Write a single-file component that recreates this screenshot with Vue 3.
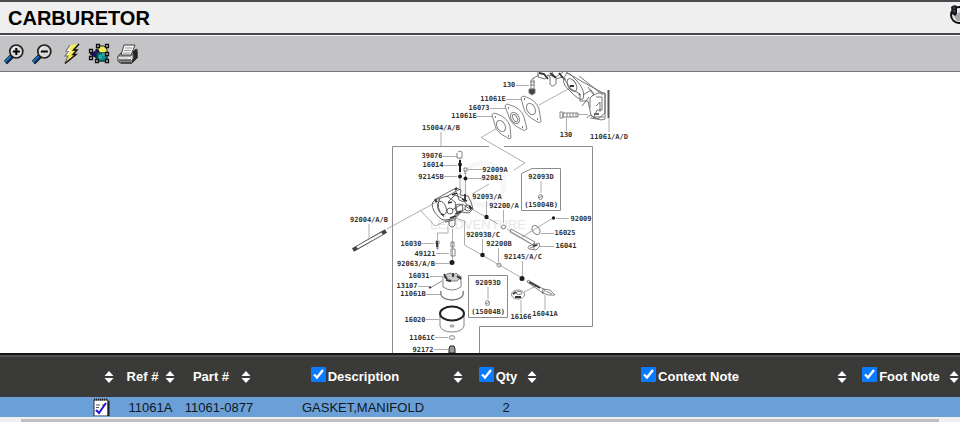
<script setup>
import { ref } from 'vue'

const columns = ref([
  { key: 'note', label: '', toggle: false },
  { key: 'ref', label: 'Ref #', toggle: false },
  { key: 'part', label: 'Part #', toggle: false },
  { key: 'description', label: 'Description', toggle: true, on: true },
  { key: 'qty', label: 'Qty', toggle: true, on: true },
  { key: 'context', label: 'Context Note', toggle: true, on: true },
  { key: 'foot', label: 'Foot Note', toggle: true, on: true }
])

const rows = [
  { ref: '11061A', part: '11061-0877', description: 'GASKET,MANIFOLD', qty: '2', context: '', foot: '' }
]

// Callouts of the exploded view: text, centre x, centre y
const callouts = [
  ['130', 509, 85], ['11061E', 493, 99], ['16073', 479, 108], ['11061E', 464, 116],
  ['130', 566, 135], ['11061/A/D', 609, 137], ['15004/A/B', 441, 128],
  ['39076', 432, 156], ['16014', 433, 165], ['92145B', 431, 177],
  ['92009A', 495, 170], ['92081', 492, 178], ['92093D', 541, 177], ['(15004B)', 541, 205],
  ['92093/A', 487, 197], ['92200/A', 504, 206], ['92009', 581, 219], ['16025', 565, 233],
  ['16041', 566, 246], ['92093B/C', 483, 235], ['92200B', 499, 244], ['92145/A/C', 523, 257],
  ['92004/A/B', 369, 220], ['16030', 411, 244], ['49121', 425, 254], ['92063/A/B', 416, 264],
  ['16031', 419, 276], ['13107', 407, 286], ['11061B', 413, 294], ['92093D', 488, 283],
  ['(15004B)', 488, 312], ['16166', 521, 317], ['16041A', 545, 314], ['16020', 415, 320],
  ['11061C', 422, 338], ['92172', 423, 350]
]
</script>

<template>
  <main class="page">
    <header class="title-bar">
      <h1>CARBURETOR</h1>
      <button class="tool" aria-label="History">
        <svg viewBox="0 0 22 22">
          <circle cx="11" cy="11" r="8" fill="#e4e4e4" stroke="#111" stroke-width="2" />
          <path d="M6 12l6-4 5 2v6l-8 1z" fill="#aaa" />
          <path d="M3 3q3-3 6-1v8l-2 2-3-2z" fill="#17191f" />
          <path d="M5 4h2M5 7h2" stroke="#65738a" />
        </svg>
      </button>
    </header>

    <nav class="toolbar">
      <button class="tool" aria-label="Zoom in">
        <svg viewBox="0 0 22 22">
          <path d="M1.5 19.5L8 13" stroke="#111" stroke-width="4.6" />
          <path d="M1 19L7 13" stroke="#1677c8" stroke-width="2" />
          <path d="M2 20.5L8 14.5" stroke="#102d75" stroke-width="1.5" />
          <circle cx="12.3" cy="8.5" r="6.5" fill="#dadada" stroke="#222" stroke-width="1.7" />
          <path d="M8 8a4.6 4.6 0 0 1 3-4" fill="none" stroke="#fff" />
          <path d="M8.8 8.5h7M12.3 5v7" stroke="#050505" stroke-width="2" />
        </svg>
      </button>
      <button class="tool" aria-label="Zoom out">
        <svg viewBox="0 0 22 22">
          <path d="M1.5 19.5L8 13" stroke="#111" stroke-width="4.6" />
          <path d="M1 19L7 13" stroke="#1677c8" stroke-width="2" />
          <path d="M2 20.5L8 14.5" stroke="#102d75" stroke-width="1.5" />
          <circle cx="12.3" cy="8.5" r="6.5" fill="#dadada" stroke="#222" stroke-width="1.7" />
          <path d="M8 8a4.6 4.6 0 0 1 3-4" fill="none" stroke="#fff" />
          <path d="M8.8 8.5h7" stroke="#050505" stroke-width="2" />
        </svg>
      </button>
      <button class="tool" aria-label="Hotspots">
        <svg viewBox="0 0 22 22">
          <path d="M10 2L19 1l-5.500 6H17L13 11.500h3L5 20l3-7H5l4-5H6z" fill="#f4ec50" />
          <path d="M10 2L6 8h3l-4 5h3l-3 7" fill="none" stroke="#777" stroke-width="1.200" />
          <path d="M19 1l-5.500 6H17l-4 4.500h3L5 20.500" fill="none" stroke="#111" stroke-width="1.500" />
          <path d="M11 3L7.500 7.500h3L7 12" fill="none" stroke="#fff" />
        </svg>
      </button>
      <button class="tool" aria-label="Select parts">
        <svg viewBox="0 0 22 22">
          <path d="M10 3h6l3 3v6h-9z" fill="#f1ed57" stroke="#222" />
          <path d="M2 11l6-3v-2l3 2v9l-4-3z" fill="#12127a" stroke="#111" />
          <path d="M9 10h10v8H9z" fill="#078d8b" stroke="#143b45" stroke-width="1.500" />
          <path d="M11 12h3v-2h3v3h-3v3h-3z" fill="#2fa597" />
          <g fill="#ccc" stroke="#111" stroke-width="1.300">
            <path d="M8.500 1.500h3v3h-3zM17.500 1.500h3v3h-3zM1.500 6.500h3v3h-3zM1.500 13.500h3v3h-3zM7.500 16.500h3v3h-3zM17.500 9.500h3v3h-3zM17.500 16.500h3v3h-3z" />
          </g>
        </svg>
      </button>
      <button class="tool" aria-label="Print">
        <svg viewBox="0 0 22 22">
          <path d="M2 13l4-4h11l4-3v9l-5 5H4l-2-2z" fill="#aaa" stroke="#333" />
          <path d="M17 8l3-2 1.500 3v6L16 20z" fill="#242424" />
          <path d="M8 2h11l-4 10H5z" fill="#f5f5f5" stroke="#444" />
          <path d="M9 5h7M8 7.500h7M7 10h7" stroke="#999" />
          <path d="M2 13h13l2-2v5l-2 2H2z" fill="#ddd" stroke="#666" />
          <path d="M3 17h12M5 20h11" stroke="#222" />
          <path d="M12 15h2" stroke="#fff" />
        </svg>
      </button>
    </nav>

    <section class="diagram">
      <svg class="exploded" viewBox="330 72 300 281" role="img" aria-label="Carburetor exploded view">
        <g class="watermark">
          <circle cx="483" cy="184" r="21" fill="none" stroke="#f7f7f7" stroke-width="5" />
          <text x="478" y="229" text-anchor="middle">LEADVENTURE</text>
        </g>

        <!-- assembly frame and inset boxes -->
        <g class="frame">
          <path d="M392.500 353V146.500H489M504 146.500H592.500V326.500H479.500V353" />
          <path d="M521.500 210.500V173.500L532 168.500H560.500V210.500ZM468.500 275.500H507.500V317.500H468.500Z" />
        </g>

        <!-- leaders -->
        <g class="leader">
          <path d="M441 132V146M443 156.500H457M444 165.500H457M444 176.500H457M468 169.500H482M468 178.500H482" />
          <path d="M516 85.500H529M506 99.500H522M490 108.500H507M476 116.500H493M566.500 118V131M609 118V132M578 114.500H588" />
          <path d="M541 181V193M486.500 201V215M503.500 210V223M556 218.500H569M541 233.500H554M540 246.500H554" />
          <path d="M482.500 239V253M498.500 248V262M522.500 261V276M488 287V299M521 300V313M545 295V310" />
          <path d="M369 224V238M422 243.500H434M436 253.500H449M435 263.500H449M430 276.500H442M418 286.500H430M426 294.500H441M426 319.500H439M435 337.500H448M434 349.500H448" />
          <path d="M539 105L570 88M499 127L481 137.500L525 163L514 170M387 229L440 200M421 211L435 226L452 218" />
          <path d="M472 209L498 224M507 229L530 243M455 218L464.500 221V245L482 255L522 278M522 237L553 218M524 292L536 286" />
          <path d="M460 158V190M465.500 173V202M472 194L489 184M448 227V233H437.500V240M452.500 229V260" />
        </g>

        <!-- intake manifold -->
        <g class="part manifold">
          <path d="M538 72v5l7 2 3-4 2 2v7q2 4 6 0v-5l7-2 8 12 9 5v7h8l3 14q8 7 14 4V94l-24-13-15-9" />
          <path d="M532 79l7-4M548 75l8 2 7-5M567 73q-8 9 2 17 10 11 14 9 3-8-6-18-6-7-10-8ZM583 95l8-5 3 4-4 4M590 98v10M582 106l7-9M592 96l6-3h7v20l-7 6-8-1M596 97h6v13h-5l-3 7h10" />
          <ellipse cx="572" cy="85" rx="4" ry="7" transform="rotate(-30 572 85)" />
          <path d="M579 76l24 19M593 94l-5-7M596 106l4-4v10M552 72l2 4M587 118q3-5 7 0" />
          <path d="M564 78l1 2M579 94l1 1M594 114h5" stroke-width="2" />
        </g>
        <path class="solid" d="M539 73l5 1 4 5M550 73l6 5M559 73l4 5M570 86h4" />
        <path class="plate" d="M608.500 90V118" />

        <!-- bolts near the manifold -->
        <g class="part">
          <path d="M531 80h3v9h-3zM530 82h5M530 85h5M563 113h15v4h-15zM560 112h3v6h-3zM567 113v4M570 113v4M573 113v4M576 113v4" />
          <path class="filled" d="M529 89h6v4l-3 2-3-2z" />
        </g>

        <!-- gaskets and spacer -->
        <g class="part gasket">
          <path d="M521 98q1-3 5-1 10 3 13 12l2 12q-1 3-5 0-10-5-12-12Z" />
          <ellipse cx="531" cy="109" rx="4" ry="6" transform="rotate(-28 531 109)" />
          <path d="M505 106q1-3 5-1 11 3 14 12l3 12q-2 3-6 0-10-5-12-12Z" />
          <ellipse cx="515" cy="118" rx="4" ry="6" transform="rotate(-28 515 118)" />
          <ellipse cx="515" cy="118" rx="2" ry="4" transform="rotate(-28 515 118)" />
          <path d="M492 115q1-3 5-1 10 3 13 12l1 12q-2 2-5-1-10-5-11-12Z" />
          <ellipse cx="501" cy="126" rx="4" ry="6" transform="rotate(-28 501 126)" />
          <path d="M524 99h1M537 119h1M508 108h1M522 127h1M495 117h1M508 136h1" stroke-width="2" />
        </g>

        <!-- carburetor body -->
        <g class="part body">
          <path d="M435 200q-5 3-1 11 5 8 10 9l9-1 4-8-2-9-8-6ZM434 200l22-12 5 2-1 5 8 1 3 6 2 7-4 4-8-1-7 8-9 2" />
          <path d="M440 198q-5 10 4 19M446 197l14-8M448 202l7-7 7 3 5 7M452 210l10-6 8 5M455 217l10-8M457 193l2 7 5 2" />
          <ellipse cx="442" cy="208" rx="4" ry="7" transform="rotate(-20 442 208)" />
          <circle cx="459" cy="208" r="4" /><circle cx="450" cy="211" r="3" /><circle cx="468" cy="208" r="3" />
          <path d="M449 219v6q3 4 6 0v-7" />
        </g>
        <path class="solid" d="M435 200l2 2M452 195l5-2M462 199l5 2M448 203l4-1M456 214l5-3M469 206l3 3M441 214l3 1M455 190l2-2M465 194v7M450 218l6-2" />

        <!-- small parts above and right of the body -->
        <g class="part">
          <path d="M458 152l2-1 2 1v6h-5v-5M464 168h3v3h-3zM465 171v3" />
          <circle cx="503.500" cy="227" r="2" /><circle cx="499" cy="265" r="2" />
          <ellipse cx="540.500" cy="197" rx="2" ry="2.500" /><path d="M539 198l3-2" />
          <ellipse cx="487.500" cy="303" rx="2" ry="2.500" /><path d="M486 304l3-2" />
          <ellipse cx="536" cy="230" rx="3.500" ry="5" transform="rotate(-35 536 230)" />
          <path d="M511 229l24 13-2 3-23-13ZM529 246l10-3 1 3-4 4-7-1q-2-2 0-3ZM528 280l17 10-2 3-16-11ZM543 289l7 1 5 5-6 0-7-2Z" />
          <path d="M530 248l8-3M534 243v6M546 291l6 3" />
          <ellipse cx="518" cy="294.500" rx="6.500" ry="4.500" /><ellipse cx="519" cy="293" rx="3" ry="1.500" />
        </g>
        <path class="solid" d="M513 294l3-2M515 297h6M529 282l11 6M533 246l4-1" />
        <g class="dots">
          <circle cx="460" cy="164.500" r="2" /><circle cx="460" cy="176.500" r="2" />
          <circle cx="465.500" cy="178.500" r="2" /><circle cx="486.500" cy="217" r="2.200" />
          <circle cx="482.500" cy="255" r="2.300" /><circle cx="522" cy="278.500" r="2.500" />
          <circle cx="452" cy="262.500" r="2.500" /><circle cx="553.500" cy="218" r="1.700" />
          <path d="M459 160h2v12h-2z" />
        </g>

        <!-- throttle shaft -->
        <path d="M353 250L386 231" stroke="#444" stroke-width="4" />
        <path d="M357 247.500L382 233.500" stroke="#fff" stroke-width="2.500" />

        <!-- float, bowl and drain parts -->
        <g class="part">
          <path d="M436 241h3v3h-3zM437 244h1v5h-1zM451 242h3v5h-3zM451 249h4v7h-4z" />
          <path d="M443 276v11q9 6 18 0v-11M430 288l12-7" />
          <path d="M441 291q-2 8 11 9 13-1 11-9" stroke-width="1.300" />
          <path d="M440 315v11q2 6 12 6t12-6v-11" />
          <ellipse cx="452" cy="326" rx="2" ry="1" />
          <ellipse cx="452" cy="337.500" rx="2.700" ry="1.800" />
          <path d="M444 277q2-4 7-4l2 3 3-3 5 4-4 4-9 0Z" fill="#ccc" />
        </g>
        <path class="solid" d="M444 274l3 5M446 280l5 1M453 273v4M457 276l4 3M429 288l2-1M437 241v6" />
        <ellipse class="seal" cx="452" cy="313.500" rx="12" ry="7" />
        <path d="M450 346h4l1 3v4h-6v-4z" fill="#999" stroke="#222" />

        <g class="callouts">
          <text v-for="([label, x, y], i) in callouts" :key="i" :x="x" :y="y + 2" text-anchor="middle">{{ label }}</text>
        </g>
      </svg>
    </section>

    <section class="parts">
      <table>
        <colgroup>
          <col v-for="c in columns" :key="c.key" :class="'col-' + c.key" />
        </colgroup>
        <thead>
          <tr>
            <th v-for="c in columns" :key="c.key">
              <div class="head">
                <label v-if="c.toggle" class="caption">
                  <input v-model="c.on" type="checkbox" />{{ c.label }}
                </label>
                <span v-else class="caption">{{ c.label }}</span>
                <button class="sort" :aria-label="'Sort ' + c.label">
                  <svg viewBox="0 0 10 12"><path d="M5 0l4.500 5H.5zM5 12L.5 7h9z" fill="#fff" /></svg>
                </button>
              </div>
            </th>
          </tr>
        </thead>
        <tbody>
          <tr v-for="r in rows" :key="r.part">
            <td class="note">
              <button class="pad" aria-label="Part notes">
                <svg viewBox="0 0 18 18">
                  <path d="M2 2h14v16H2z" fill="#fff" stroke="#333" />
                  <path d="M16.500 3v15" stroke="#222" stroke-width="2" />
                  <path d="M2 1.500h14" stroke="#222" stroke-width="2" stroke-dasharray="1 1" />
                  <path d="M4 7h4M4 9.500h3M10 7h3" stroke="#555" />
                  <path d="M4 12l3 3 7-10" fill="none" stroke="#2314d2" stroke-width="2" />
                </svg>
              </button>
            </td>
            <td>{{ r.ref }}</td>
            <td>{{ r.part }}</td>
            <td>{{ r.description }}</td>
            <td>{{ r.qty }}</td>
            <td>{{ r.context }}</td>
            <td>{{ r.foot }}</td>
          </tr>
        </tbody>
      </table>
      <div class="scroll-track"><div class="scroll-thumb"></div></div>
    </section>
  </main>
</template>

<style>
body {
  background: #fff;
  overflow: hidden;
}
</style>

<style scoped>
.page {
  font-family: "Liberation Sans", Arial, sans-serif;
  font-size: 13px;
  color: #101820;
}
button {
  padding: 0;
  border: 0;
  background: none;
}
svg {
  display: block;
}
.title-bar {
  display: flex;
  align-items: center;
  justify-content: space-between;
  height: 31px;
  padding-left: 8px;
  border-top: 2px solid #4c484d;
  border-bottom: 2px solid #4c484d;
  background: #efefef;
  overflow: hidden;
}
h1 {
  margin: 0;
  font-size: 20px;
  line-height: 24px;
  color: #000;
}
.tool svg {
  width: 22px;
  height: 22px;
}
.title-bar .tool {
  margin: -6px -10px 0 0;
}
.toolbar {
  display: flex;
  align-items: center;
  gap: 6px;
  height: 35px;
  padding: 0 4px;
  border-top: 1px solid #f8f8f8;
  border-bottom: 1px solid #777578;
  background: #c4c3c6;
}
.exploded {
  width: 300px;
  margin: 0 auto;
}
.exploded text {
  font: bold 7px "DejaVu Sans Mono", monospace;
  fill: #333;
}
.exploded .watermark text {
  font: 13px "Liberation Sans", sans-serif;
  fill: #e6e6e6;
}
.frame {
  fill: none;
  stroke: #8c8c8c;
}
.leader {
  fill: none;
  stroke: #999;
  stroke-width: 0.8;
}
.part {
  fill: none;
  stroke: #777;
  stroke-width: 0.9;
}
.manifold {
  stroke: #666;
}
.plate {
  stroke: #555;
  stroke-width: 2;
}
.gasket {
  fill: #fff;
}
.body {
  stroke: #555;
}
.filled {
  fill: #444;
}
.solid {
  fill: none;
  stroke: #333;
  stroke-width: 1.8;
}
.dots {
  fill: #1c1c1c;
}
.seal {
  fill: none;
  stroke: #222;
  stroke-width: 2;
}
.parts {
  border-top: 2px solid #141414;
  overflow: hidden;
}
table {
  width: 100%;
  table-layout: fixed;
  border-collapse: collapse;
}
.col-note { width: 120px; }
.col-ref { width: 61px; }
.col-part { width: 76px; }
.col-description { width: 212px; }
.col-qty { width: 74px; }
.col-foot { width: 107px; }
thead {
  background: #3a3b38;
  color: #fff;
}
th {
  height: 40px;
  padding: 0;
  border-top: 2px solid #50524f;
}
.head {
  display: flex;
  align-items: center;
  padding-right: 6px;
}
th:last-child .head {
  padding-right: 1px;
}
.caption {
  display: flex;
  flex: 1;
  align-items: center;
  justify-content: center;
  line-height: 16px;
  white-space: nowrap;
}
input {
  width: 15px;
  height: 15px;
  margin: 0 2px 6px 0;
  accent-color: #0a7aff;
}
.sort svg {
  width: 10px;
  height: 12px;
}
tbody {
  background: #6a9fd8;
}
td {
  height: 20px;
  padding: 0;
  text-align: center;
  white-space: nowrap;
}
.note {
  padding-right: 10px;
}
.pad {
  display: block;
  margin-left: auto;
}
.pad svg {
  width: 18px;
  height: 18px;
}
.scroll-track {
  padding: 2px 21px 0;
  background: #f0f0f0;
}
.scroll-thumb {
  height: 4px;
  background: #c0c0c0;
}
</style>
